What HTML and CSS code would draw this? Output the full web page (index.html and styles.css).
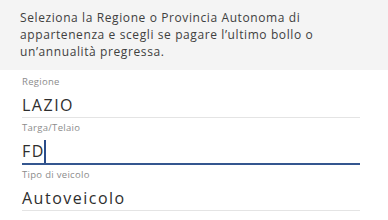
FILE: index.html
```html
<!DOCTYPE html>
<html lang="it">
<head>
    <meta charset="UTF-8" />
    <meta name="viewport" content="width=device-width, initial-scale=1">
    <title>Bollo auto</title>
    <link rel="stylesheet" href="styles.css">
</head>
<body>
    <div class="intro">
        <p>Seleziona la Regione o Provincia Autonoma di appartenenza e scegli se pagare l’ultimo bollo o un’annualità pregressa.</p>
    </div>

    <div class="form">
        <div class="field">
            <label>Regione</label>
            <div class="value">LAZIO</div>
        </div>
        <div class="field active">
            <label>Targa/Telaio</label>
            <div class="value">FD<span class="caret"></span></div>
        </div>
        <div class="field">
            <label>Tipo di veicolo</label>
            <div class="value">Autoveicolo</div>
        </div>
    </div>
</body>
</html>
```

FILE: styles.css
```css
* { box-sizing: border-box; }
body {
    margin: 0;
    background: #fff;
    font-family: 'Open Sans', sans-serif;
    color: #222;
}
.intro {
    background: #f4f4f4;
    height: 70px;
    padding: 9px 20px 0 20px;
}
.intro p {
    margin: 0;
    width: 315px;
    font-size: 12px;
    line-height: 17px;
    letter-spacing: 0.6px;
    color: #404040;
}
.form {
    padding: 2px 28px 0 22px;
}
.field {
    padding-top: 3px;
    border-bottom: 1px solid #e4e4e4;
}
.field label {
    display: block;
    font-size: 9.5px;
    line-height: 14px;
    letter-spacing: 0.3px;
    color: #8c8c8c;
}
.field .value {
    padding-top: 4px;
    font-size: 16px;
    line-height: 24px;
    letter-spacing: 1.5px;
    color: #2e2e2e;
}
.field.active {
    border-bottom: 2px solid #34568f;
}
.caret {
    display: inline-block;
    width: 2px;
    height: 23px;
    margin-left: -1px;
    vertical-align: -6px;
    background: #2a4c8a;
}
```
